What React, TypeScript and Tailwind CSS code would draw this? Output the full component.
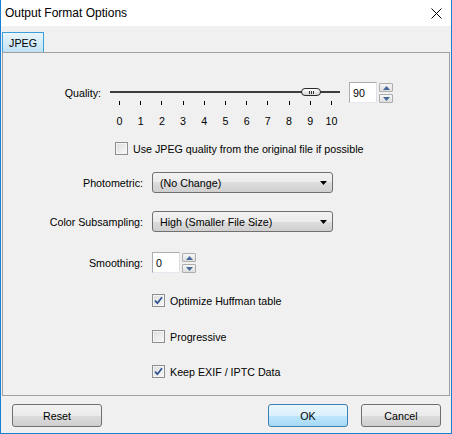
import React from "react";

const winBtn =
  "bg-[linear-gradient(#f2f2f2_0%,#ebebeb_50%,#dddddd_50%,#cfcfcf_100%)]";

const CheckBox = ({ checked }: { checked?: boolean }) => (
  <span className="flex h-[13px] w-[13px] shrink-0 items-center justify-center border border-[#8e8f8f] bg-linear-to-br from-[#dcdcdc] to-[#fafafa] shadow-[inset_0_0_0_1px_#f4f4f4]">
    {checked && (
      <svg width="9" height="9" viewBox="0 0 9 9">
        <path d="M1 4.6 L3.4 7.2 L8 1.2" stroke="#2f4f8f" strokeWidth="1.7" fill="none" />
      </svg>
    )}
  </span>
);

const SpinButton = ({ up }: { up?: boolean }) => (
  <div className="flex h-[9px] w-[14px] items-center justify-center rounded-[1px] border border-[#adadad] bg-linear-to-b from-[#f7f7f7] to-[#dedede]">
    <svg width="7" height="4" viewBox="0 0 7 4">
      <path d={up ? "M0 4 L3.5 0 L7 4Z" : "M0 0 L3.5 4 L7 0Z"} fill="#46689c" />
    </svg>
  </div>
);

const SpinBox = ({ value }: { value: string }) => (
  <div className="flex items-start">
    <div className="flex h-[21px] w-[28px] items-center border border-[#abadb3] border-b-[#e3e9ef] border-r-[#dbdfe6] bg-white pl-[3px]">
      {value}
    </div>
    <div className="ml-[2px] mt-[1px] flex flex-col gap-[2px]">
      <SpinButton up />
      <SpinButton />
    </div>
  </div>
);

const Combo = ({ value }: { value: string }) => (
  <div
    className={`ml-[9px] flex h-[21px] w-[181px] items-center justify-between rounded-[3px] border border-[#707070] pl-[7px] pr-[5px] ${winBtn}`}
  >
    <span>{value}</span>
    <svg width="7" height="4" viewBox="0 0 7 4">
      <path d="M0 0 L3.5 4 L7 0Z" fill="#000" />
    </svg>
  </div>
);

const LabelRow = ({ label, children }: { label: string; children: React.ReactNode }) => (
  <div className="flex h-[21px] items-center">
    <div className="w-[140px] text-right">{label}</div>
    {children}
  </div>
);

const App = () => {
  const ticks = ["0", "1", "2", "3", "4", "5", "6", "7", "8", "9", "10"];
  return (
    <div className="flex h-[434px] w-[452px] flex-col border-x border-b border-[#1a7fd4] bg-[#f0f0f0] font-['Liberation_Sans',Arial,sans-serif] text-[10.7px] leading-[12px] text-black">
      {/* title bar */}
      <div className="flex h-[26px] items-center justify-between bg-white pl-[4px] pr-[9px]">
        <span className="text-[12px]">Output Format Options</span>
        <svg width="11" height="11" viewBox="0 0 11 11">
          <path d="M0.5 0.5 L10.5 10.5 M10.5 0.5 L0.5 10.5" stroke="#000" strokeWidth="1" />
        </svg>
      </div>

      {/* tab */}
      <div className="ml-[1px] mt-[6px] flex h-[20px] w-[42px] items-center justify-center border-x border-t border-[#3c9fd8] bg-linear-to-b from-[#eaf5fc] to-[#bfe2f6]">
        JPEG
      </div>

      {/* panel */}
      <div className="mx-[1px] flex h-[344px] flex-col border border-[#a0a0a0] bg-[#f0f0f0]">
        {/* quality */}
        <div className="mt-[29px] flex h-[50px] items-start">
          <div className="flex h-[21px] w-[98px] items-center justify-end">Quality:</div>
          <div className="relative ml-[9px] w-[230px]">
            <div className="mt-[9px] h-[2px] bg-[#3c3c3c]" />
            <div className="absolute left-[191px] top-[6px] flex h-[8px] w-[20px] items-center justify-center gap-[1px] rounded-[4px] border border-[#2a2a2a] bg-linear-to-b from-white to-[#d8d8d8]">
              <span className="h-[3px] w-[1px] bg-[#333]" />
              <span className="h-[3px] w-[1px] bg-[#333]" />
              <span className="h-[3px] w-[1px] bg-[#333]" />
            </div>
            <div className="mt-[8px] flex justify-between pl-[9px] pr-[8px]">
              {ticks.map((t) => (
                <span key={t} className="h-[4px] w-[1px] bg-black" />
              ))}
            </div>
            <div className="mt-[10px] flex justify-between pl-[9px] pr-[8px]">
              {ticks.map((t) => (
                <span key={t} className="flex w-[1px] justify-center">
                  {t}
                </span>
              ))}
            </div>
          </div>
          <div className="ml-[9px]">
            <SpinBox value="90" />
          </div>
        </div>

        <div className="mt-[10px] flex h-[13px] items-center gap-[5px] pl-[112px]">
          <CheckBox />
          <span>Use JPEG quality from the original file if possible</span>
        </div>

        <div className="mt-[17px]">
          <LabelRow label="Photometric:">
            <Combo value="(No Change)" />
          </LabelRow>
        </div>

        <div className="mt-[18px]">
          <LabelRow label="Color Subsampling:">
            <Combo value="High (Smaller File Size)" />
          </LabelRow>
        </div>

        <div className="mt-[20px]">
          <LabelRow label="Smoothing:">
            <div className="ml-[9px]">
              <SpinBox value="0" />
            </div>
          </LabelRow>
        </div>

        <div className="mt-[21px] flex h-[13px] items-center gap-[5px] pl-[149px]">
          <CheckBox checked />
          <span>Optimize Huffman table</span>
        </div>
        <div className="mt-[23px] flex h-[13px] items-center gap-[5px] pl-[149px]">
          <CheckBox />
          <span>Progressive</span>
        </div>
        <div className="mt-[22px] flex h-[13px] items-center gap-[5px] pl-[149px]">
          <CheckBox checked />
          <span>Keep EXIF / IPTC Data</span>
        </div>
      </div>

      {/* footer */}
      <div className="mt-[8px] flex">
        <div
          className={`ml-[11px] flex h-[23px] w-[90px] items-center justify-center rounded-[3px] border border-[#707070] ${winBtn}`}
        >
          Reset
        </div>
        <div className="ml-auto flex h-[23px] w-[80px] items-center justify-center rounded-[3px] border border-[#3c7fb1] bg-[linear-gradient(#eaf6fd_0%,#d9f0fc_50%,#bee6fd_50%,#a7d9f5_100%)]">
          OK
        </div>
        <div
          className={`ml-[13px] mr-[10px] flex h-[23px] w-[80px] items-center justify-center rounded-[3px] border border-[#707070] ${winBtn}`}
        >
          Cancel
        </div>
      </div>
    </div>
  );
};

export default App;
